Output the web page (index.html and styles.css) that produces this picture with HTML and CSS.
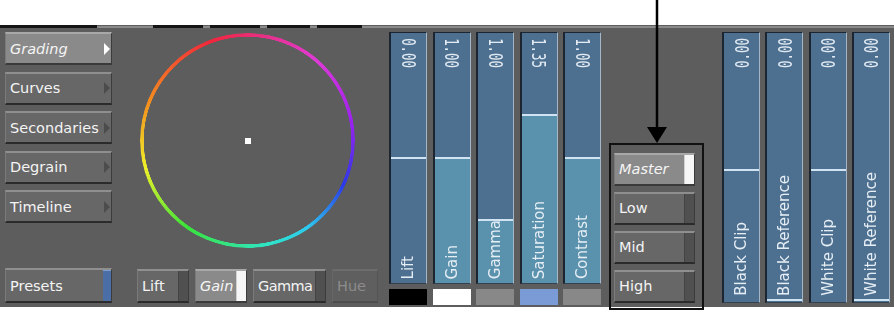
FILE: index.html
```html
<!DOCTYPE html>
<html lang="en">
<head>
  <meta charset="UTF-8" />
  <title>Colour Correction</title>
  <link rel="stylesheet" href="styles.css">
</head>
<body>
  <div class="screen">
    <div class="console">
      <!-- cut-off tab row above the panel -->
      <div class="tabs">
        <span class="tab t1"></span>
        <span class="tab t2"></span>
        <span class="tab t3"></span>
        <span class="tab t4"></span>
        <span class="tab t5"></span>
      </div>

      <div class="panel">
        <!-- Menu -->
        <div class="menu">
          <div class="btn on"><span class="txt">Grading</span><span class="tri"></span></div>
          <div class="btn"><span class="txt">Curves</span><span class="tri"></span></div>
          <div class="btn"><span class="txt">Secondaries</span><span class="tri"></span></div>
          <div class="btn"><span class="txt">Degrain</span><span class="tri"></span></div>
          <div class="btn"><span class="txt">Timeline</span><span class="tri"></span></div>
          <div class="btn presets"><span class="txt">Presets</span><span class="ind"></span></div>
        </div>

        <!-- Colour wheel -->
        <div class="wheel-col">
          <div class="wheel">
            <div class="ring"></div>
            <div class="dot"></div>
          </div>
          <div class="modes">
            <div class="btn lift"><span class="txt">Lift</span><span class="ind"></span></div>
            <div class="btn gain on"><span class="txt">Gain</span><span class="ind"></span></div>
            <div class="btn gamma"><span class="txt">Gamma</span><span class="ind"></span></div>
            <div class="btn hue off"><span class="txt">Hue</span></div>
          </div>
        </div>

        <!-- Grading faders -->
        <div class="faders">
          <div class="fader-row">
            <div class="fader" style="--lv:50.5%"><span class="val">0.00</span><span class="name">Lift</span></div>
            <div class="fader lit" style="--lv:50.5%"><span class="val">1.00</span><span class="name">Gain</span></div>
            <div class="fader lit" style="--lv:25.5%"><span class="val">1.00</span><span class="name">Gamma</span></div>
            <div class="fader lit" style="--lv:67.5%"><span class="val">1.35</span><span class="name">Saturation</span></div>
            <div class="fader lit" style="--lv:50.5%"><span class="val">1.00</span><span class="name">Contrast</span></div>
          </div>
          <div class="swatches">
            <span class="swatch black"></span>
            <span class="swatch white"></span>
            <span class="swatch grey"></span>
            <span class="swatch blue"></span>
            <span class="swatch grey"></span>
          </div>
        </div>

        <!-- Tonal ranges -->
        <div class="ranges">
          <div class="btn on"><span class="txt">Master</span><span class="ind"></span></div>
          <div class="btn"><span class="txt">Low</span><span class="ind"></span></div>
          <div class="btn"><span class="txt">Mid</span><span class="ind"></span></div>
          <div class="btn"><span class="txt">High</span><span class="ind"></span></div>
        </div>

        <!-- Clip / reference faders -->
        <div class="fader-row right">
          <div class="fader" style="--lv:49.5%"><span class="val">0.00</span><span class="name">Black Clip</span></div>
          <div class="fader" style="--lv:1.2%"><span class="val">0.00</span><span class="name">Black Reference</span></div>
          <div class="fader" style="--lv:49.5%"><span class="val">0.00</span><span class="name">White Clip</span></div>
          <div class="fader" style="--lv:1.2%"><span class="val">0.00</span><span class="name">White Reference</span></div>
        </div>
      </div>
    </div>

    <!-- annotation -->
    <svg class="arrow" width="24" height="145" viewBox="0 0 24 145">
      <line x1="12" y1="0" x2="12" y2="130" stroke="#000" stroke-width="2.5" />
      <polygon points="2,127 22,127 12,143" fill="#000" />
    </svg>
    <div class="callout"></div>
  </div>
</body>
</html>
```

FILE: styles.css
```css
body {
  margin: 0;
  background: #fff;
  font-family: "DejaVu Sans", sans-serif;
}

.screen {
  position: relative;
  width: 894px;
  height: 312px;
  overflow: hidden;
}

.console {
  margin-top: 25px;
  height: 282px;
  background: #5d5d5d;
}

.tabs {
  display: flex;
  height: 3px;
  background: linear-gradient(#5d5d5d 0 1px, #8a8a8a 1px 3px);
}

.tab {
  height: 3px;
  background: #151515;
}

.t1 { width: 97px; }
.t2 { width: 50px; margin-left: 56px; }
.t3 { width: 50px; margin-left: 7px; }
.t4 { width: 43px; margin-left: 7px; }
.t5 { width: 45px; margin-left: 7px; }

.panel {
  display: flex;
  height: 271px;
  padding: 4px 0 4px 5px;
}

/* buttons */
.btn {
  box-sizing: border-box;
  height: 33px;
  display: flex;
  background: #676767;
  border-top: 2px solid #8f8f8f;
  border-bottom: 2px solid #2b2b2b;
  border-left: 1px solid #7a7a7a;
  border-right: 1px solid #3c3c3c;
  color: #f4f4f4;
  font-size: 14.5px;
}

.btn .txt {
  flex: 1;
  min-width: 0;
  display: flex;
  align-items: center;
  padding-left: 4px;
  white-space: nowrap;
}

.btn .ind {
  width: 8px;
  background: #505050;
  border-left: 1px solid #444;
}

.btn.on {
  background: #8a8a8a;
  border-top-color: #a8a8a8;
  border-bottom-color: #3a3a3a;
}

.btn.on .txt {
  font-style: italic;
}

.btn.on .ind {
  background: #f6f6f6;
  border-left-color: #d0d0d0;
}

.tri {
  align-self: center;
  width: 0;
  height: 0;
  margin-right: 1px;
  border-left: 6px solid #4c4c4c;
  border-top: 6px solid transparent;
  border-bottom: 6px solid transparent;
}

.btn.on .tri {
  border-left-color: #fff;
}

.btn.off {
  background: #5f5f5f;
  border-top-color: #6c6c6c;
  border-bottom-color: #4c4c4c;
  border-left-color: #666;
  border-right-color: #555;
  color: #8c8c8c;
}

/* menu column */
.menu {
  width: 107px;
  display: flex;
  flex-direction: column;
  gap: 6.5px;
}

.menu .presets {
  margin-top: auto;
  height: 35px;
}

.presets .ind {
  background: #4a6ea5;
  border-left: none;
  border-top: 1px solid #7d9fd0;
}

/* wheel */
.wheel-col {
  width: 277px;
  display: flex;
  flex-direction: column;
}

.wheel {
  width: 215px;
  height: 215px;
  margin: 1px 0 0 28px;
  display: grid;
  place-items: center;
}

.ring,
.dot {
  grid-area: 1 / 1;
}

.ring {
  width: 100%;
  height: 100%;
  border-radius: 50%;
  background: conic-gradient(from -20deg, #f0263c 0deg, #e03ad6 60deg, #9a22ee 100deg, #2a3ae6 135deg, #2ec8ee 165deg, #2ee6c4 190deg, #3ae23a 235deg, #eef02a 275deg, #f3901e 310deg, #f0263c 360deg);
  -webkit-mask: radial-gradient(farthest-side, transparent calc(100% - 4px), #000 calc(100% - 3.5px));
  mask: radial-gradient(farthest-side, transparent calc(100% - 4px), #000 calc(100% - 3.5px));
}

.dot {
  width: 6px;
  height: 6px;
  background: #fff;
}

.modes {
  margin-top: auto;
  display: flex;
  gap: 6px;
  padding-left: 25px;
}

.modes .btn { height: 34px; }
.modes .lift { width: 52px; }
.modes .gain { width: 52px; }
.modes .gamma { width: 73px; }
.modes .gamma .txt { letter-spacing: -0.6px; }
.modes .hue { width: 46px; }
.modes .ind { width: 9px; }

/* faders */
.faders {
  display: flex;
  flex-direction: column;
}

.fader-row {
  display: flex;
  gap: 5.5px;
}

.fader {
  --fill: #4e7090;
  box-sizing: border-box;
  width: 38px;
  height: 252px;
  display: flex;
  flex-direction: column;
  justify-content: space-between;
  align-items: center;
  border-top: 1px solid #1d2630;
  border-left: 2px solid #1d2630;
  border-right: 1px solid #a4b7c9;
  border-bottom: 1px solid #34414e;
  background: linear-gradient(to top, var(--fill) 0 calc(var(--lv) - 2px), #d0e3f2 calc(var(--lv) - 2px) var(--lv), #4e7090 var(--lv));
  color: #e6eef5;
}

.fader.lit {
  --fill: #5a91ac;
}

.val {
  writing-mode: vertical-rl;
  margin-top: -4px;
  font-family: "DejaVu Sans Mono", monospace;
  font-size: 20px;
  line-height: 1;
  color: #e2ebf4;
  transform: scale(1, 0.62);
}

.name {
  writing-mode: vertical-rl;
  transform: rotate(180deg);
  margin-bottom: 4px;
  font-size: 15px;
  line-height: 1;
  white-space: nowrap;
}

.swatches {
  display: flex;
  gap: 5.5px;
  margin-top: 5px;
}

.swatch {
  width: 38px;
  height: 16px;
}

.swatch.black { background: #000; }
.swatch.white { background: #fff; }
.swatch.grey { background: #888; }
.swatch.blue { background: #7a9bd6; }

/* tonal ranges */
.ranges {
  width: 81px;
  margin-left: 13px;
  display: flex;
  flex-direction: column;
  justify-content: flex-end;
  gap: 5.5px;
}

.ranges .btn {
  height: 33.5px;
}

.ranges .ind {
  width: 9px;
}

/* clip faders */
.right {
  margin-left: 27px;
  gap: 5.33px;
}

.right .fader {
  height: 271px;
}

.right .val {
  transform: rotate(180deg) scale(1, 0.62);
}

.right .name {
  margin-bottom: 6px;
}

/* annotation over the panel */
.arrow {
  position: absolute;
  left: 645px;
  top: 0;
}

.callout {
  position: absolute;
  left: 609px;
  top: 143px;
  width: 95px;
  height: 167px;
  box-sizing: border-box;
  border: 2px solid #111;
}
```
